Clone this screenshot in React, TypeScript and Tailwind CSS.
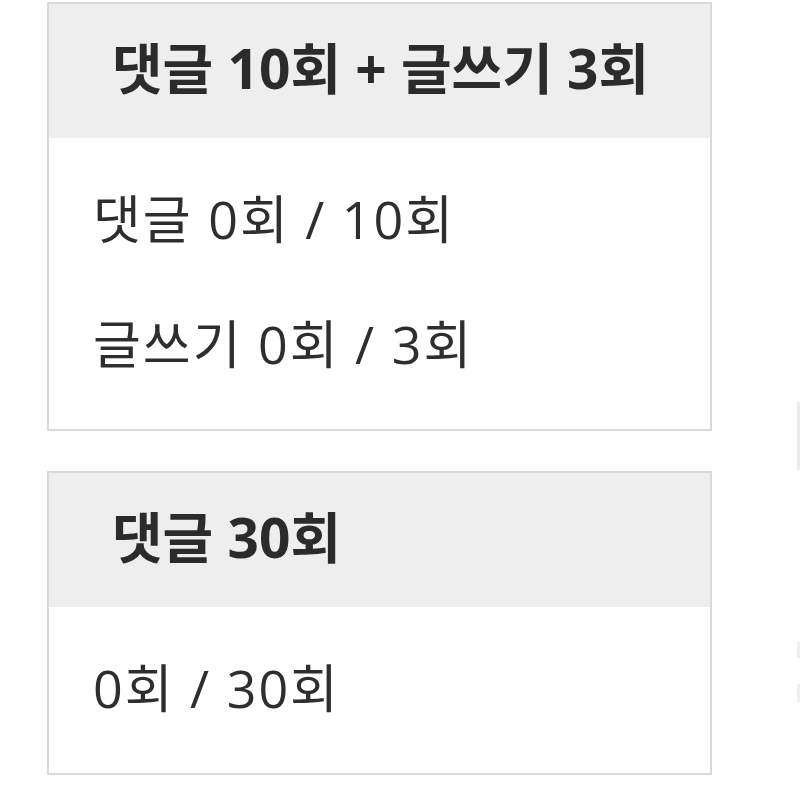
const quests = [
  {
    title: '댓글 10회 + 글쓰기 3회',
    rows: ['댓글 0회 / 10회', '글쓰기 0회 / 3회'],
  },
  {
    title: '댓글 30회',
    rows: ['0회 / 30회'],
  },
];

function QuestCard({ title, rows }: { title: string; rows: string[] }) {
  return (
    <div className="w-[665px] border-2 border-[#d9d9d9] bg-white">
      <div className="flex h-[134px] items-center bg-[#efeeee] pb-[8px] pl-[63px] text-[55px] font-bold leading-none text-[#2b2b2b]">
        {title}
      </div>
      <div className="flex flex-col gap-[65px] pb-[55px] pl-[44px] pt-[51px]">
        {rows.map((row) => (
          <div key={row} className="text-[52px] leading-[60px] tracking-[2px] text-[#2e2e2e]">
            {row}
          </div>
        ))}
      </div>
    </div>
  );
}

export default function App() {
  return (
    <div
      className="flex h-[800px] w-[800px] overflow-hidden bg-white pl-[47px] pt-[2px]"
      style={{ fontFamily: '"Open Sans", "Noto Sans CJK KR", sans-serif' }}
    >
      <div className="flex flex-col gap-[40px]">
        {quests.map((q) => (
          <QuestCard key={q.title} title={q.title} rows={q.rows} />
        ))}
      </div>
      {/* edge of the next column, cut off by the viewport */}
      <div className="ml-[85px] flex flex-col">
        <div className="mt-[400px] h-[68px] w-[3px] bg-[#ececec]" />
        <div className="mt-[172px] h-[16px] w-[3px] bg-[#efefef]" />
        <div className="mt-[26px] h-[18px] w-[3px] bg-[#efefef]" />
      </div>
    </div>
  );
}
